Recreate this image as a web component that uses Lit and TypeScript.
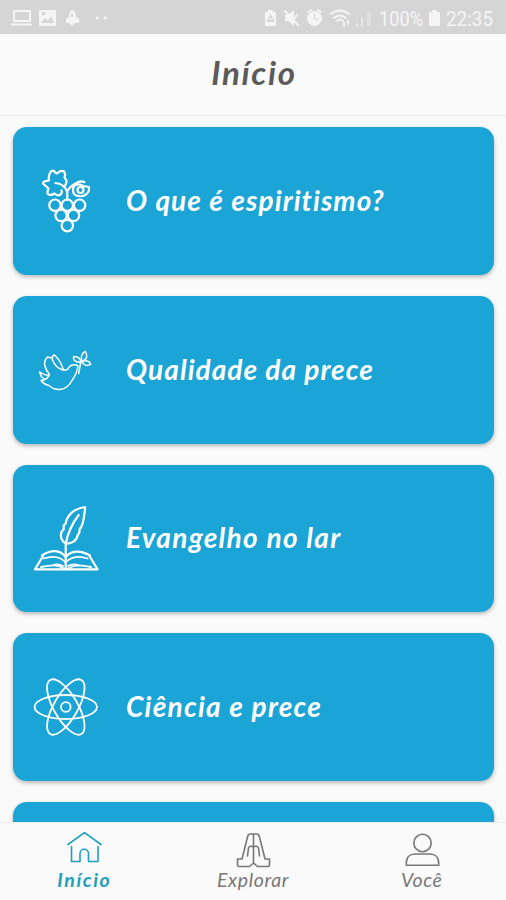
import { LitElement, html, css, svg, type TemplateResult } from "lit";
import { customElement } from "lit/decorators.js";
import { styleMap } from "lit/directives/style-map.js";

interface Topic { label: string; icon: TemplateResult; spacing: number; }

const grapes = html`<svg class="art" viewBox="0 0 66 66" stroke-width="2.2">
  <path d="M15.500 20.500 10 15.500q0-2 3-2.500l3-.5q-1-5 2-9 3-2 4 1l2 1q4-4 7-2 2 2 .5 6l2 3q0 5-3 6M15.500 20.500q-2 5 0 6 3 1 6-1 3 3 6 1 2-2 1-4"/>
  <path d="M22.500 15q9 1 11.800 9v8m0-9q3-5 9-8c3-2 6-2 8-1M40 22c0-6 6-7 10-4l6 1c1 7-6 10-10 9-4 0-6-2-6-6"/>
  <circle cx="47.500" cy="22" r="3"/>
  ${[[22, 37.2], [34.3, 37.2], [46.6, 37.2], [28.1, 47.4], [40.5, 47.4], [34.3, 57.6]].map(([x, y]) => svg`<circle cx=${x} cy=${y} r="5.7"/>`)}
</svg>`;
const dove = html`<svg class="art" viewBox="0 0 66 66" stroke-width="1.5">
  <path d="M45 29q-3-2-7-.5-2 1-3.500 4l-4 .7C29 28 26 22 21.500 18q-3 1-2 5 3 8 11 10.300M19 21l-4.500-1q-4 4-2.500 9 1 4 4.500 8.500M6.500 35q4 3 9.500 3.500l-1 1.500q-2 3-7 3.500 3 4 8 5 5 4.500 11 4 8-1 12-9 5-7 6-14.500M6.500 35l2 5 3 2"/>
  <path d="m45.700 36.400 2-11m0 0c-5 0-8-2-7-6 4 0 7 2 7 6m1-1c-1-5 0-8 3.500-10 3 4 2 8-3.500 10m0 0c4-1 8-1 9 3-4 2-7 1-9-3"/>
</svg>`;
const book = html`<svg class="art" viewBox="0 0 66 66" stroke-width="2.200">
  <path d="M32.700 38.500c-4-2-6-7-4-12l2-2v-4l2-2c1-8 8-15 19.500-16.500-1 8-1 14-4 20l-1.500 2-.5 4-1.500 2c-1 6-6 9-12 8.500M32.700 51V39c2-11 6-20 13-29"/>
  <path d="M10 51 2 64.300h62.500L56.500 51M32.700 53v11M9 50.500c9-6 18-6 23.700 1.500 5-7 15-7 24.300-1.500"/>
  <path stroke-width="1.800" d="M10.500 53.500c9-3 17-2 22.200 4 5-6 14-7 22-4M8 62c9-2 16-3 23 1.500M58 62c-9-2-16-3-23 1.500M19 60.500q6-2.500 11 .5m16-.5q-6-2.500-11 .5"/>
</svg>`;
const atom = html`<svg class="art" viewBox="0 0 66 66" stroke-width="1.8">
  ${[0, 60, 120].map(a => svg`<ellipse cx="32.800" cy="33" rx="31.200" ry="12" transform="rotate(${a} 32.8 33)"/>`)}
  <circle cx="32.800" cy="33" r="4.800"/>
</svg>`;

const topics: Topic[] = [
  { label: "O que é espiritismo?", icon: grapes, spacing: 1.1 },
  { label: "Qualidade da prece", icon: dove, spacing: 1.05 },
  { label: "Evangelho no lar", icon: book, spacing: 1.3 },
  { label: "Ciência e prece", icon: atom, spacing: 1.25 },
];

const home = html`<svg class="tabicon" viewBox="0 0 36 37"><path d="M2 13.500 18.500 1.700 35 13.500M5.500 15.500v15h8.500V22.500a4.200 4.200 0 0 1 8.500 0v8H32v-15"/></svg>`;
const hands = html`<svg class="tabicon" viewBox="0 0 36 37"><path d="M18.500 3v29l-4 3.500H4q-1.500 0-1.500-2V28H7l5.500-22q.5-3 3-3h6q2.500 0 3 3L30 28h4.500v5.500q0 2-1.500 2H22.500l-4-3.500M12.500 25l1-8q1.500-3 5-1 3.500-2 5 1l1 8"/></svg>`;
const person = html`<svg class="tabicon" viewBox="0 0 36 37"><circle cx="18.500" cy="12" r="8.700"/><path d="M2.300 34.200v-2C2.300 26 6 23 11 23h15c5 0 8.700 3 8.700 9.200v2z"/></svg>`;

@customElement("app-root")
export class AppRoot extends LitElement {
  static styles = css`
    :host { display: flex; flex-direction: column; height: 900px; overflow: hidden; background: #fafafa; color: #5b5b5b; font-family: "Lato", sans-serif; font-style: italic; }
    * { box-sizing: border-box; }
    svg { fill: none; stroke: currentColor; stroke-linejoin: round; stroke-linecap: round; flex: none; }
    .status { height: 34px; flex: none; background: #d5d5d5; color: #f5f5f5; display: flex; justify-content: space-between; font: 19.5px Roboto, sans-serif; }
    .title { height: 82px; flex: none; border-bottom: 1.5px solid #e8e8e8; display: flex; justify-content: center; align-items: center; padding: 0 0 6px 2px; font-size: 33px; font-weight: 700; letter-spacing: 1.7px; }
    .list { flex: 1; min-height: 0; overflow: hidden; padding: 11px 12px 0 13px; display: flex; flex-direction: column; gap: 21px; }
    .card { height: 147.800px; flex: none; border-radius: 14px; background: #1ba5d6; color: #fff; display: flex; align-items: center; gap: 27px; padding-left: 20px; box-shadow: 0 2px 4px #0004; font-size: 28px; font-weight: 700; white-space: nowrap; }
    .card span { padding-bottom: 2px; }
    .art { width: 66px; height: 66px; overflow: visible; }
    .tabs { height: 78px; flex: none; display: flex; border-top: 1px solid #eee; }
    .tab { flex: 1; display: flex; flex-direction: column; align-items: center; padding-top: 8px; color: #777; font-size: 19.5px; line-height: 24px; letter-spacing: .6px; }
    .active { color: #1d9fbd; font-weight: 700; letter-spacing: 1.6px; }
    .tabicon { width: 36px; height: 37px; stroke-width: 1.6; }
  `;
  render() {
    return html`
      <div class="status">
        <svg width="110" height="34" viewBox="0 0 110 34"><path stroke-width="2" d="M14 21V11h16v10zM12 24.500h19"/><path fill="currentColor" stroke="none" fill-rule="evenodd" d="M39 10h17v16H39zM41 23l4-5 3 3 3-5 3 7zM42 12h3v3h-3zM66 23v-4l3-2c0-4 1-6 3-7 3 1 4 3 4 7l3 2v4h-4l-3 3-3-3zM71 14v3h2v-3z"/><path stroke-width="3" d="M97 18h.1M105 18h.1"/></svg>
        <svg width="242" height="34" viewBox="264 0 242 34"><path fill="currentColor" stroke="none" fill-rule="evenodd" d="M265 12h3v-2h5v2h3v14h-11zM270.500 14l-4 8h8zM270.500 17l1.500 3h-3zM285 15h3l6-5v16l-6-5h-3zM429 12h3v-2h5v2h3v14h-11V12z"/><path stroke-width="2" d="m285 11 13 14m-1-10-3 4"/><circle cx="314.500" cy="18.500" r="7" fill="currentColor"/><path stroke-width="2" d="m308 12 3-2m7 0 3 2"/><path stroke="#d5d5d5" d="M314.500 14v5h4"/><path stroke-width="2" d="M331 14q9-7 18 0m-15 4q6-5 12 0m-9 3q3-3 6 0m1 2v3m4-5v3"/><path stroke-width="2" opacity=".6" d="M357 26v-2m5 2v-7"/><path stroke-width="4" stroke-linecap="butt" opacity=".35" d="M369 26V12"/><g fill="currentColor" stroke="none"><text x="379" y="26" textLength="44" lengthAdjust="spacingAndGlyphs">100%</text><text x="446" y="26" textLength="47" lengthAdjust="spacingAndGlyphs">22:35</text></g></svg>
      </div>
      <header class="title">Início</header>
      <main class="list">
        ${topics.map(t => html`<section class="card">${t.icon}<span style=${styleMap({ letterSpacing: `${t.spacing}px` })}>${t.label}</span></section>`)}
        <section class="card"></section>
      </main>
      <nav class="tabs">
        <div class="tab active">${home}<span>Início</span></div>
        <div class="tab">${hands}<span>Explorar</span></div>
        <div class="tab">${person}<span>Você</span></div>
      </nav>`;
  }
}
